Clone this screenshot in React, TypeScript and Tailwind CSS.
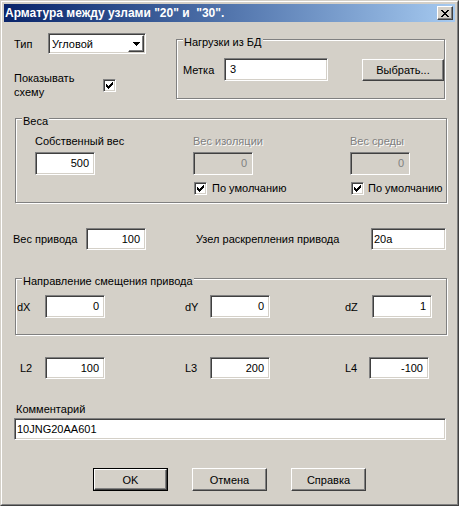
const sunken =
  'border border-t-[#808080] border-l-[#808080] border-b-white border-r-white shadow-[inset_1px_1px_0_#404040,inset_-1px_-1px_0_#d4d0c8]'
const raised =
  'border border-t-white border-l-white border-b-[#404040] border-r-[#404040] shadow-[inset_-1px_-1px_0_#808080]'

function Field({
  value,
  className = '',
  align = 'right',
  disabled = false,
}: {
  value: string
  className?: string
  align?: 'left' | 'right'
  disabled?: boolean
}) {
  return (
    <div
      className={`${sunken} flex items-center overflow-hidden whitespace-nowrap pb-[1px] ${
        align === 'right' ? 'justify-end pr-[5px]' : 'justify-start pl-[2px]'
      } ${disabled ? 'bg-[#d4d0c8] text-[#808080]' : 'bg-white'} ${className}`}
    >
      {value}
    </div>
  )
}

function Check({ className = '' }: { className?: string }) {
  return (
    <div className={`${sunken} flex h-[13px] w-[13px] shrink-0 items-center justify-center bg-white ${className}`}>
      <svg width="7" height="7" viewBox="0 0 7 7" shapeRendering="crispEdges">
        <path d="M0 2h1v1h1v1h1V3h1V2h1V1h1V0h1v3H6v1H5v1H4v1H3v1H2V6H1V5H0z" fill="#000" />
      </svg>
    </div>
  )
}

function Button({ label, isDefault = false }: { label: string; isDefault?: boolean }) {
  if (isDefault) {
    return (
      <div className="h-[23px] w-[75px] border border-black">
        <div className={`${raised} flex h-full w-full items-center justify-center`}>{label}</div>
      </div>
    )
  }
  return <div className={`${raised} flex h-[23px] w-[75px] items-center justify-center`}>{label}</div>
}

function Group({
  label,
  className = '',
  children,
}: {
  label: string
  className?: string
  children: React.ReactNode
}) {
  return (
    <div
      className={`relative shrink-0 border border-[#808080] shadow-[inset_1px_1px_0_#fff,1px_1px_0_#fff] ${className}`}
    >
      <span className="absolute left-[6px] top-[-5px] bg-[#d4d0c8] px-[1px]">{label}</span>
      {children}
    </div>
  )
}

function Disabled({ children }: { children: React.ReactNode }) {
  return <span className="text-[#808080] [text-shadow:1px_1px_0_#fff]">{children}</span>
}

function Combo() {
  return (
    <div className={`${sunken} flex h-[21px] w-[98px] items-center bg-white p-[1px]`}>
      <span className="flex-1 pl-[2px]">Угловой</span>
      <div className={`${raised} flex h-[17px] w-[16px] items-center justify-center`}>
        <svg width="7" height="4" viewBox="0 0 7 4" shapeRendering="crispEdges">
          <path d="M0 0h7v1H6v1H5v1H4v1H3V3H2V2H1V1H0z" fill="#000" />
        </svg>
      </div>
    </div>
  )
}

function TitleBar() {
  return (
    <div className="flex h-[18px] shrink-0 items-center justify-between bg-linear-to-r from-[#0a246a] to-[#a6caf0] pl-[1px] pr-[2px]">
      <span className="text-[12px] font-bold text-white">Арматура между узлами "20" и &nbsp;"30".</span>
      <div className={`${raised} flex h-[14px] w-[16px] items-center justify-center bg-[#d4d0c8]`}>
        <svg width="8" height="7" viewBox="0 0 8 7" shapeRendering="crispEdges">
          <path
            d="M0 0h2v1h1v1h2V1h1V0h2v1H7v1H6v1H5v1h1v1h1v1h1v1H6V6H5V5H3v1H2v1H0V6h1V5h1V4h1V3H2V2H1V1H0z"
            fill="#000"
          />
        </svg>
      </div>
    </div>
  )
}

export default function App() {
  return (
    <div className="h-[506px] w-[459px] font-['Liberation_Sans',Arial,sans-serif] text-[11px] leading-[14px] text-black select-none">
      <div className="h-full border border-b-[#404040] border-l-[#d4d0c8] border-r-[#404040] border-t-[#d4d0c8]">
        <div className="flex h-full flex-col border border-b-[#808080] border-l-white border-r-[#808080] border-t-white bg-[#d4d0c8] p-[2px]">
          <TitleBar />

          {/* type + loads from DB */}
          <div className="mt-[11px] flex items-start">
            <div className="ml-[10px] w-[162px] shrink-0">
              <div className="flex h-[21px] items-center">
                <span className="w-[34px]">Тип</span>
                <Combo />
              </div>
              <div className="mt-[17px] flex items-start">
                <span className="w-[70px]">Показывать схему</span>
                <Check className="ml-[19px] mt-[8px]" />
              </div>
            </div>
            <Group label="Нагрузки из БД" className="mt-[6px] h-[60px] w-[269px]">
              <div className="flex items-center pl-[6px] pt-[18px]">
                <span className="w-[41px]">Метка</span>
                <Field value="3" align="left" className="h-[23px] w-[104px] !pl-[5px]" />
                <div className="ml-[34px]">
                  <div className={`${raised} flex h-[22px] w-[82px] items-center justify-center`}>Выбрать...</div>
                </div>
              </div>
            </Group>
          </div>

          {/* weights */}
          <div className="ml-[11px] mt-[19px]">
            <Group label="Веса" className="h-[85px] w-[432px]">
              <div className="flex pl-[19px] pt-[15px]">
                <div className="w-[158px]">
                  <div>Собственный вес</div>
                  <Field value="500" className="mt-[4px] h-[23px] w-[60px]" />
                </div>
                <div className="w-[157px]">
                  <Disabled>Вес изоляции</Disabled>
                  <Field value="0" disabled className="mt-[4px] h-[23px] w-[60px]" />
                  <div className="ml-[1px] mt-[6px] flex items-center gap-[5px]">
                    <Check />
                    <span>По умолчанию</span>
                  </div>
                </div>
                <div>
                  <Disabled>Вес среды</Disabled>
                  <Field value="0" disabled className="mt-[4px] h-[23px] w-[60px]" />
                  <div className="ml-[1px] mt-[6px] flex items-center gap-[4px]">
                    <Check />
                    <span className="whitespace-nowrap">По умолчанию</span>
                  </div>
                </div>
              </div>
            </Group>
          </div>

          {/* drive */}
          <div className="ml-[9px] mt-[25px] flex h-[22px] items-center">
            <span className="w-[73px]">Вес привода</span>
            <Field value="100" className="h-[22px] w-[60px]" />
            <span className="ml-[50px] w-[175px]">Узел раскрепления привода</span>
            <Field value="20a" align="left" className="h-[22px] w-[75px]" />
          </div>

          {/* offset direction */}
          <div className="ml-[11px] mt-[28px]">
            <Group label="Направление смещения привода" className="h-[57px] w-[432px]">
              <div className="flex items-center pl-[1px] pt-[16px]">
                <span className="w-[28px]">dX</span>
                <Field value="0" className="h-[23px] w-[60px]" />
                <span className="ml-[80px] w-[25px]">dY</span>
                <Field value="0" className="h-[23px] w-[60px]" />
                <span className="ml-[75px] w-[27px]">dZ</span>
                <Field value="1" className="h-[23px] w-[60px]" />
              </div>
            </Group>
          </div>

          {/* lengths */}
          <div className="ml-[16px] mt-[22px] flex h-[22px] items-center">
            <span className="w-[25px]">L2</span>
            <Field value="100" className="h-[22px] w-[60px]" />
            <span className="ml-[80px] w-[25px]">L3</span>
            <Field value="200" className="h-[22px] w-[60px]" />
            <span className="ml-[75px] w-[24px]">L4</span>
            <Field value="-100" className="h-[22px] w-[60px]" />
          </div>

          <div className="ml-[12px] mt-[23px]">Комментарий</div>
          <Field value="10JNG20AA601" align="left" className="ml-[10px] mt-[2px] h-[22px] w-[432px] shrink-0" />

          <div className="ml-[89px] mt-[28px] flex gap-[24px]">
            <Button label="OK" isDefault />
            <Button label="Отмена" />
            <Button label="Справка" />
          </div>
        </div>
      </div>
    </div>
  )
}
